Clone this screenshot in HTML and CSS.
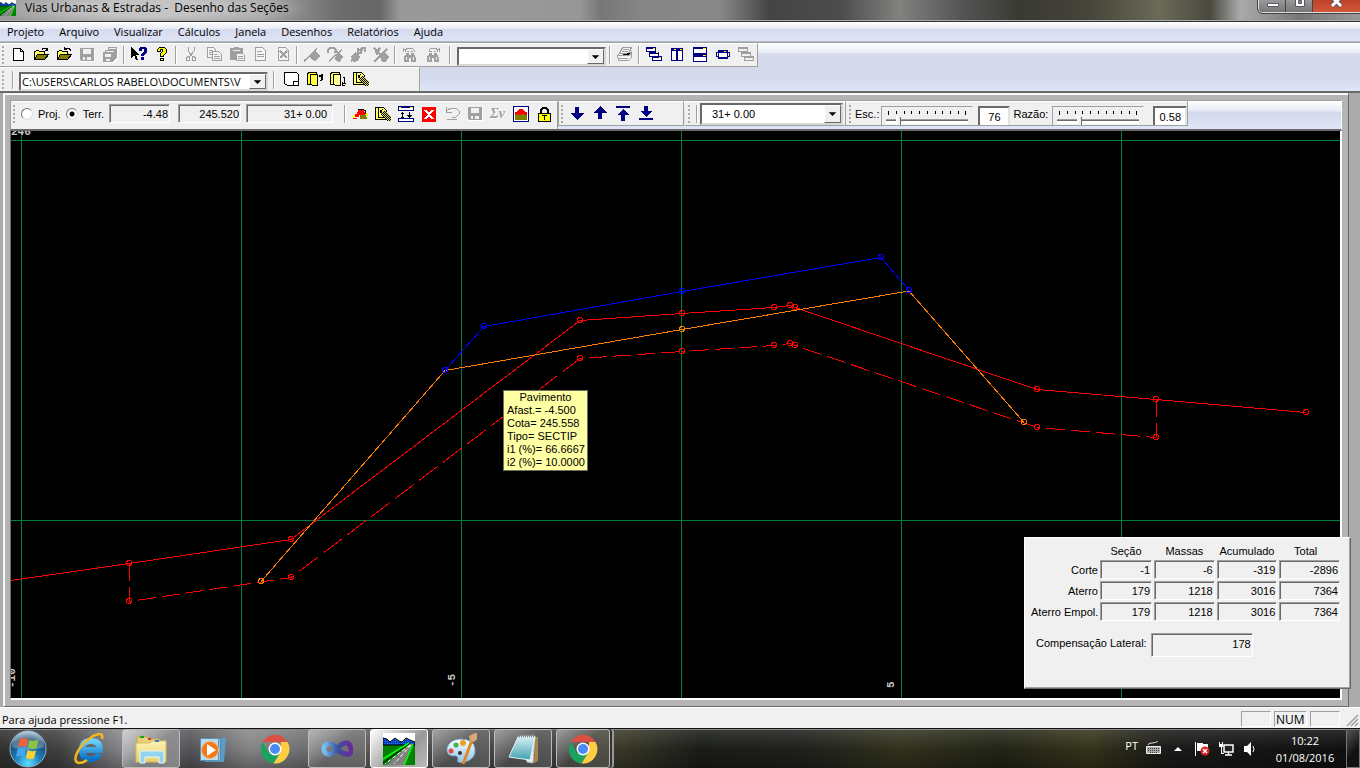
FILE: index.html
```html
<!DOCTYPE html>
<html lang="pt-BR">
<head>
<meta charset="utf-8">
<title>Vias Urbanas &amp; Estradas - Desenho das Seções</title>
<link rel="stylesheet" href="styles.css">
</head>
<body>
<svg class="sprite" aria-hidden="true">
  <defs>
    <pattern id="hatch" width="2" height="2" patternUnits="userSpaceOnUse"><path fill="#ffff80" d="M0 0h2v2H0z"/><path fill="#ff0" d="M0 0h1v1H0zM1 1h1v1H1z"/></pattern>
    <pattern id="check" width="2" height="2" patternUnits="userSpaceOnUse"><path fill="#e0d860" d="M0 0h2v2H0z"/><path fill="#000" d="M0 0h1v1H0zM1 1h1v1H1z"/></pattern>
    <pattern id="ridge" width="2" height="2" patternUnits="userSpaceOnUse"><path fill="#0040c0" d="M0 0h2v2H0z"/><path fill="#2878e8" d="M0 0h1v1H0z"/></pattern>
    <radialGradient id="orb" cx=".5" cy=".9" r=".9"><stop offset="0" stop-color="#5fe0ff"/><stop offset=".4" stop-color="#1d7db8"/><stop offset=".75" stop-color="#1c4a70"/><stop offset="1" stop-color="#a8c4d8"/></radialGradient>
    <linearGradient id="ie" x2="0" y2="1"><stop offset="0" stop-color="#6fd0fa"/><stop offset="1" stop-color="#0870c8"/></linearGradient>
    <linearGradient id="folder" x2="0" y2="1"><stop offset="0" stop-color="#fdf3b4"/><stop offset="1" stop-color="#ecce6c"/></linearGradient>
    <linearGradient id="vs"><stop offset="0" stop-color="#78c0f0"/><stop offset=".5" stop-color="#3a50a0"/><stop offset="1" stop-color="#6a2a9c"/></linearGradient>
    <linearGradient id="pad" x2="0" y2="1"><stop offset="0" stop-color="#d4f0f4"/><stop offset="1" stop-color="#3fa0b0"/></linearGradient>
    <linearGradient id="palette" x2="0" y2="1"><stop offset="0" stop-color="#fff"/><stop offset="1" stop-color="#8cc4ec"/></linearGradient>
  </defs>
  <symbol id="i-new" viewBox="0 0 16 16"><path fill="#fff" stroke="#000" d="M3.500 1.500h7l3 3v9h-10z"/><path fill="none" stroke="#000" d="M10.500 1.500v3h3"/></symbol>
  <symbol id="i-open" viewBox="0 0 16 16"><path fill="#ffff60" stroke="#000" d="M1.500 12.500v-8h1l1-1h2l1 1h5v3"/><path fill="#808000" stroke="#000" d="M1.500 12.500l3-5h11l-4 5z"/><path fill="none" stroke="#000" d="M9 2.500l1-1h3l1 2M12 3.500h3M14.500 1v3"/></symbol>
  <symbol id="i-openup" viewBox="0 0 16 16"><path fill="#ffff60" stroke="#000" d="M1.500 12.500v-8h1l1-1h2l1 1h5v3"/><path fill="#808000" stroke="#000" d="M1.500 12.500l3-5h11l-4 5z"/><path fill="none" stroke="#000" d="M8.500 0v3M8 2.500h3M9 1.500h4l1 1v1"/></symbol>
  <symbol id="i-save" viewBox="0 0 16 16"><path fill="#fff" d="M2 15h14V3h-1v11H2z"/><path fill="#a0a0a0" fill-rule="evenodd" d="M1 1h14v13H2l-1-1zM4 2v5h8V2zM4 10v3h2v-3zM8 10v3h4v-3z"/></symbol>
  <symbol id="i-saveall" viewBox="0 0 16 16"><path fill="#fff" d="M2 16h10l4-4V2h-1v10l-4 3H2z"/><path fill="#a0a0a0" fill-rule="evenodd" d="M6 0h9v10l-4 5H1V5h2V3h3zM7 1v1h7V1zM4 4v1h8V4zM3 7v3h6V7zM4 12v2h4v-2z"/></symbol>
  <symbol id="i-help" viewBox="0 0 16 16"><path d="M0 0v11l3-3 2 5h2l-2-5h4z"/><path fill="#000080" d="M9 0h5l2 2v3l-3 3v1h-3V7l3-3V2h-2v2H8V1zM10 10h3v3h-3z"/></symbol>
  <symbol id="i-about" viewBox="0 0 16 16"><path fill="#ff0" stroke="#000" d="M5.500.5h5l2 2v3l-3 3v1h-3v-3l2-2v-2h-2v2h-3v-2zM6.500 11.500h3v2h-3z"/></symbol>
  <symbol id="i-cut" viewBox="0 0 16 16"><g fill="none" stroke="#a0a0a0"><path d="M5 0v4l5 6M11 0v4l-5 6"/><path d="M3.500 10.500l2-1 1 1v3h-3zM9.500 9.500h2l1 2v2h-3z"/></g></symbol>
  <symbol id="i-copy" viewBox="0 0 16 16"><g fill="#f4f4f4" stroke="#a0a0a0"><path d="M1.500.5h6l2 2v8h-8z"/><path d="M3 3.500h4M3 5.500h3M3 7.500h3"/><path d="M6.500 4.500h6l3 3v6h-9z"/><path d="M8 7.500h3M8 9.500h6M8 11.500h6"/></g></symbol>
  <symbol id="i-paste" viewBox="0 0 16 16"><path fill="#a0a0a0" d="M1 1h4V0h5v1h4v12H1z"/><path stroke="#f0f0f0" d="M4 3.500h7"/><path fill="#f4f4f4" stroke="#a0a0a0" d="M7.500 6.500h6l2 2v5h-8z"/><path stroke="#a0a0a0" d="M9 9.500h5M9 11.500h5"/></symbol>
  <symbol id="i-doc" viewBox="0 0 16 16"><path fill="#f4f4f4" stroke="#a0a0a0" d="M3.500.5h7l3 3v10h-10z"/><path stroke="#a0a0a0" d="M5 4.500h5M5 7.500h7M5 9.500h7"/></symbol>
  <symbol id="i-docx" viewBox="0 0 16 16"><path fill="#f4f4f4" stroke="#a0a0a0" d="M3.500.5h7l3 3v10h-10z"/><path stroke="#a0a0a0" stroke-width="2" d="M5 4l7 7M12 4l-7 7"/></symbol>
  <symbol id="i-p1" viewBox="0 0 16 16"><path stroke="#a0a0a0" stroke-width="1.500" d="M0 14L13 2"/><path fill="#a0a0a0" d="M11 4l5 5-4 5-4-1-2-3z"/></symbol>
  <symbol id="i-p2" viewBox="0 0 16 16"><path fill="none" stroke="#a0a0a0" stroke-width="1.500" d="M1 6V3l2-2h4l2 2v2M7 5h4M2 14L15 3"/><path fill="#a0a0a0" d="M12 5l4 5-3 5-4-1-1-3z"/></symbol>
  <symbol id="i-p3" viewBox="0 0 16 16"><path fill="none" stroke="#a0a0a0" stroke-width="1.500" d="M1 14L13 3M8 1v5h4M9 4l3-3h3v4"/><path fill="#a0a0a0" d="M5 5l5 5-2 4-5 1-2-5z"/></symbol>
  <symbol id="i-p4" viewBox="0 0 16 16"><path stroke="#a0a0a0" stroke-width="2" d="M1 1l13 13M1 15L14 2M7 1L2 6"/><path fill="#a0a0a0" d="M11 5l5 5-3 5H9L7 9zM1 2l6 1-3 6z"/></symbol>
  <symbol id="i-find" viewBox="0 0 16 16"><path fill="#a0a0a0" d="M4 6h3v2h2V6h3v2h1l1 3v4H9v-4H7v4H2v-4l1-3h1zM5 4h2v1H5zM9 4h2v1H9z"/><path stroke="#f0f0f0" d="M4.500 10v3M11.500 10v3"/><path fill="none" stroke="#a0a0a0" d="M3.500 5V2.500L5 1h5l2 2v2M1 2.500h4M1.500 1v4"/></symbol>
  <symbol id="i-print" viewBox="0 0 16 16"><path fill="#f4f4f4" stroke="#a0a0a0" d="M5.500.5h9l-3 6h-9zM.5 8.500l2-2h9l3-2v6l-3 3H1.500z"/><path stroke="#a0a0a0" d="M6 2.500h6M5 4.500h6M1 8.500h11l3-3M1 11.500h10"/></symbol>
  <symbol id="i-cascade" viewBox="0 0 16 16"><g stroke="#000080" fill="#fff"><path d="M.5.5h9v4h-9zM3.500 5.500h9v4h-9zM6.500 9.500h9v4h-9z"/><path stroke-width="2" d="M0 1h10M3 6h10M6 10h10"/></g><path fill="#ff0" d="M7 1h2v1H7zM10 5h2v1h-2zM13 10h2v1h-2z"/></symbol>
  <symbol id="i-cascadeoff" viewBox="0 0 16 16"><g stroke="#a0a0a0" fill="#f0f0f0"><path d="M.5.5h9v4h-9zM3.500 5.500h9v4h-9zM6.500 9.500h9v4h-9z"/><path stroke-width="2" d="M0 1h10M3 6h10M6 10h10"/></g></symbol>
  <symbol id="i-tilev" viewBox="0 0 16 16"><path fill="#fff" stroke="#000080" d="M2.500 1.500h5v12h-5zM8.500 1.500h5v12h-5z"/><path stroke="#000080" stroke-width="3" d="M2 2.500h12"/><path fill="#ff0" d="M5 2h2v1H5zM11 2h2v1h-2z"/></symbol>
  <symbol id="i-tileh" viewBox="0 0 16 16"><path fill="#fff" stroke="#000080" d="M1.500.5h13v14h-13z"/><path stroke="#000080" stroke-width="2" d="M1 1h14M1 9h14M1 7h14"/><path fill="#ff0" d="M11 1h3v1h-3zM11 8h3v1h-3z"/></symbol>
  <symbol id="i-win" viewBox="0 0 16 16"><path fill="#fff" stroke="#000080" d="M3.500 3.500h9v8h-9z"/><path fill="#fff" stroke="#000080" d="M1.500 5.500h2v4h-2zM12.500 5.500h2v4h-2z"/><path stroke="#000080" stroke-width="2" d="M3 5h10M3 11h10"/><path fill="#ff0" d="M9 4h2v1H9z"/></symbol>
  <symbol id="i-sheet" viewBox="0 0 16 16"><path fill="#fff" stroke="#000" d="M.5 1.500h12l2 2v11h-11l-3-2z"/><path fill="none" stroke="#000" d="M9.500 14v-4h5"/></symbol>
  <symbol id="i-bookup" viewBox="0 0 16 16"><path fill="url(#hatch)" stroke="#000" d="M.5 2.500l2-1h7v12h-9z"/><path fill="url(#hatch)" stroke="#000" d="M3.500 3.500h7v11h-5l-2-2z"/><path fill="none" stroke="#000" stroke-width="2" d="M15 3v5l-1 2M12 5h4"/></symbol>
  <symbol id="i-bookdown" viewBox="0 0 16 16"><path fill="url(#hatch)" stroke="#000" d="M.5 2.500l2-1h7v12h-9z"/><path fill="#ffffa0" stroke="#000" d="M3.500 3.500h7v11h-5l-2-2z"/><path fill="none" stroke="#000" d="M12.500 6.500h2v6M12 12.500h4M12 11v3h3"/></symbol>
  <symbol id="i-map" viewBox="0 0 16 16"><path fill="#ffff70" stroke="#000" d="M.5 1.500h8l3 3v9h-11z"/><path fill="none" stroke="#000" d="M3.500 2v9h6M5 4l5 6M8 3L5 7"/><path fill="url(#check)" d="M6 6l4-1 6 6v4h-3L6 9z"/></symbol>
  <symbol id="i-hat" viewBox="0 0 16 16"><path fill="#f00" d="M4 8h1V6h1V4h6v2h1v3H4z"/><path d="M6 3h6v1H6zM12 4h2v4h-1V5h-1z"/><path fill="#808000" d="M8 9h6v2h1v2H8z"/><path fill="#ff0" d="M1 9h2v3H1zM14 7h2v3h-2z"/><path fill="#f00" d="M3 8h4v3H3zM1 12h4v1H1z"/></symbol>
  <symbol id="i-section" viewBox="0 0 16 16"><path fill="#fff" stroke="#000080" d="M.5.5h15v4H.5zM.5 12.500h15v3H.5z"/><path stroke="#000080" stroke-width="2" d="M0 1h16"/><path fill="#ff0" d="M1 1h2v1H1zM12 1h3v1h-3z"/><path d="M4 6h1v1h1v1H5v3h1v1H3v-1h1V8H3V7h1zM11 6h1v3h2v1h-1v1h-1v1h-1v-1h-1v-1H9V9h2z"/></symbol>
  <symbol id="i-del" viewBox="0 0 16 16"><path fill="#f00" d="M1 1h14v15H1z"/><path stroke="#fff" stroke-width="2" d="M4 4l8 9M12 4l-8 9"/></symbol>
  <symbol id="i-undo" viewBox="0 0 16 16"><path fill="none" stroke="#a0a0a0" d="M2.500 1v5h5M3 5l4-3h5l3 3v3l-3 3H8M3 13.500h10"/></symbol>
  <symbol id="i-land" viewBox="0 0 16 16"><path fill="#fff" stroke="#000080" d="M.5.500h15v15H.5z"/><path fill="#808000" d="M2 8h12v6H2z"/><path fill="#f00" d="M2 6h2V5h1V4h1V3h4v1h1v1h1v1h2v3h-3V8H9v1H6V8H4v1H2z"/></symbol>
  <symbol id="i-lock" viewBox="0 0 16 16"><path fill="none" stroke="#000" stroke-width="2" d="M5 8V4l2-2h3l2 2v4"/><path fill="#ff0" stroke="#000" d="M2.500 7.500h12v8h-12z"/><path d="M6 9h5v1H9v4H8v-4H6z"/></symbol>
  <symbol id="i-down" viewBox="0 0 16 16"><path fill="#000080" d="M6 1h4v6h5l-7 7-7-7h5z"/></symbol>
  <symbol id="i-up" viewBox="0 0 16 16"><path fill="#000080" d="M6 13h4V7h5L8 0 1 7h5z"/></symbol>
  <symbol id="i-first" viewBox="0 0 16 16"><path fill="#000080" d="M1 0h14v2H1zM6 15h4V9h4L8 3 2 9h4z"/></symbol>
  <symbol id="i-last" viewBox="0 0 16 16"><path fill="#000080" d="M1 12h14v2H1zM6 0h4v5h4l-6 6-6-6h4z"/></symbol>
  <symbol id="i-caret" viewBox="0 0 16 16"><path d="M4 6h8l-4 4z"/></symbol>
  <symbol id="app" viewBox="0 0 32 32"><path fill="#fff" d="M0 0h32v32H0z"/><path fill="#008000" d="M0 11h32v21H0z"/><path fill="url(#ridge)" stroke="#000" d="M0 5l4 1 3 3 5-4 4 3 3 1 4-4 4 2 5 2v3H0z"/><path fill="#808080" d="M27 11h3l-8 21H3z"/><path fill="none" stroke="#000" d="M27 10L0 30"/><path fill="none" stroke="#0f0" stroke-width="1.500" d="M26 10L0 26M30 11l-9 21"/><path stroke="#fff" stroke-dasharray="4 2" d="M28 12L11 31M27 12L2 31"/></symbol>
  <symbol id="t-chrome" viewBox="0 0 32 32"><path fill="#dd4f43" d="M3.500 9a14.500 14.500 0 0 1 25 0H16z"/><path fill="#1da160" d="M3.500 9a14.500 14.500 0 0 0 11 21.500L22 20l-12 0z"/><path fill="#ffce44" d="M28.500 9a14.500 14.500 0 0 1-14 21.500L21 20l1-11z"/><circle cx="16" cy="16" r="6.500" fill="#fff"/><circle cx="16" cy="16" r="5" fill="#4a8af4"/></symbol>
</svg>

<header class="title">
  <svg class="title-icon"><use href="#app"/></svg>
  <h1>Vias Urbanas &amp; Estradas -&nbsp; Desenho das Seções</h1>
  <div class="window-buttons">
    <button aria-label="Minimizar"><svg viewBox="0 0 28 12"><path fill="#fff" stroke="#555a66" d="M8.500 3.500h11v3h-11z"/></svg></button>
    <button aria-label="Restaurar"><svg viewBox="0 0 28 12"><path fill="#fff" stroke="#555a66" d="M9.500-2v8.500h9V-2z"/><path fill="#888" stroke="#555a66" d="M12.500.5h3v3h-3z"/></svg></button>
    <button class="close" aria-label="Fechar"><svg viewBox="0 0 28 12"><path fill="none" stroke="#555a66" stroke-width="5" d="M9-3l9 9M18-3L9 6"/><path fill="none" stroke="#fff" stroke-width="3" d="M9-3l9 9M18-3L9 6"/></svg></button>
  </div>
</header>

<nav class="menu">
  <button>Projeto</button><button>Arquivo</button><button>Visualizar</button><button>Cálculos</button><button>Janela</button><button>Desenhos</button><button>Relatórios</button><button>Ajuda</button>
</nav>

<div class="rebar">
  <div class="band band-top">
    <i class="grip"></i>
    <button class="tool" aria-label="Novo"><svg><use href="#i-new"/></svg></button>
    <button class="tool" aria-label="Abrir"><svg><use href="#i-open"/></svg></button>
    <button class="tool" aria-label="Abrir projeto"><svg><use href="#i-openup"/></svg></button>
    <button class="tool" aria-label="Salvar"><svg><use href="#i-save"/></svg></button>
    <button class="tool" aria-label="Salvar tudo"><svg><use href="#i-saveall"/></svg></button>
    <i class="sep"></i>
    <button class="tool" aria-label="Ajuda de contexto"><svg><use href="#i-help"/></svg></button>
    <button class="tool" aria-label="Sobre"><svg><use href="#i-about"/></svg></button>
    <i class="sep"></i>
    <button class="tool" aria-label="Recortar"><svg><use href="#i-cut"/></svg></button>
    <button class="tool" aria-label="Copiar"><svg><use href="#i-copy"/></svg></button>
    <button class="tool" aria-label="Colar"><svg><use href="#i-paste"/></svg></button>
    <button class="tool" aria-label="Documento"><svg><use href="#i-doc"/></svg></button>
    <button class="tool" aria-label="Excluir documento"><svg><use href="#i-docx"/></svg></button>
    <i class="sep"></i>
    <button class="tool" aria-label="Marcador"><svg><use href="#i-p1"/></svg></button>
    <button class="tool" aria-label="Próximo marcador"><svg><use href="#i-p2"/></svg></button>
    <button class="tool" aria-label="Marcador anterior"><svg><use href="#i-p3"/></svg></button>
    <button class="tool" aria-label="Limpar marcadores"><svg><use href="#i-p4"/></svg></button>
    <i class="sep"></i>
    <button class="tool" aria-label="Localizar anterior"><svg><use href="#i-find"/></svg></button>
    <button class="tool flip" aria-label="Localizar próximo"><svg><use href="#i-find"/></svg></button>
    <i class="sep"></i>
    <div class="combo combo-find"><select aria-label="Localizar texto"><option></option></select><span class="arrow"><svg><use href="#i-caret"/></svg></span></div>
    <i class="sep"></i>
    <button class="tool" aria-label="Imprimir"><svg><use href="#i-print"/></svg></button>
    <i class="sep"></i>
    <button class="tool" aria-label="Em cascata"><svg><use href="#i-cascade"/></svg></button>
    <button class="tool" aria-label="Lado a lado vertical"><svg><use href="#i-tilev"/></svg></button>
    <button class="tool" aria-label="Lado a lado horizontal"><svg><use href="#i-tileh"/></svg></button>
    <button class="tool" aria-label="Janela única"><svg><use href="#i-win"/></svg></button>
    <button class="tool" aria-label="Fechar todas"><svg><use href="#i-cascadeoff"/></svg></button>
  </div>
  <div class="band band-path">
    <i class="grip"></i>
    <i class="sep"></i>
    <div class="combo combo-path"><select aria-label="Pasta do projeto"><option>C:\USERS\CARLOS RABELO\DOCUMENTS\V</option></select><span class="arrow"><svg><use href="#i-caret"/></svg></span></div>
    <i class="sep"></i>
    <div class="path-tools">
      <button class="tool" aria-label="Folha"><svg><use href="#i-sheet"/></svg></button>
      <button class="tool" aria-label="Subir"><svg><use href="#i-bookup"/></svg></button>
      <button class="tool" aria-label="Descer"><svg><use href="#i-bookdown"/></svg></button>
      <button class="tool" aria-label="Mapa"><svg><use href="#i-map"/></svg></button>
    </div>
  </div>
</div>

<main class="mdi">
  <section class="child">
    <div class="child-bar">
      <form class="band band-view">
        <i class="grip"></i>
        <label><input type="radio" name="base"> Proj.</label>
        <label><input type="radio" name="base" checked> Terr.</label>
        <output class="field f-offset">-4.48</output>
        <output class="field f-level">245.520</output>
        <output class="field f-station">31+ 0.00</output>
        <i class="sep"></i>
        <button type="button" class="tool" aria-label="Terreno"><svg><use href="#i-hat"/></svg></button>
        <button type="button" class="tool" aria-label="Mapa"><svg><use href="#i-map"/></svg></button>
        <button type="button" class="tool" aria-label="Seção tipo"><svg><use href="#i-section"/></svg></button>
        <button type="button" class="tool" aria-label="Excluir"><svg><use href="#i-del"/></svg></button>
        <button type="button" class="tool" aria-label="Desfazer"><svg><use href="#i-undo"/></svg></button>
        <button type="button" class="tool" aria-label="Salvar seção"><svg><use href="#i-save"/></svg></button>
        <button type="button" class="tool sum">Σν</button>
        <button type="button" class="tool" aria-label="Áreas"><svg><use href="#i-land"/></svg></button>
        <button type="button" class="tool" aria-label="Travar"><svg><use href="#i-lock"/></svg></button>
      </form>
      <div class="band band-nav">
        <i class="grip"></i>
        <button class="tool" aria-label="Próxima"><svg><use href="#i-down"/></svg></button>
        <button class="tool" aria-label="Anterior"><svg><use href="#i-up"/></svg></button>
        <button class="tool" aria-label="Primeira"><svg><use href="#i-first"/></svg></button>
        <button class="tool" aria-label="Última"><svg><use href="#i-last"/></svg></button>
      </div>
      <div class="band band-station">
        <i class="grip"></i>
        <i class="sep"></i>
        <div class="combo combo-station"><select aria-label="Estaca"><option>31+ 0.00</option></select><span class="arrow"><svg><use href="#i-caret"/></svg></span></div>
      </div>
      <div class="band band-scale">
        <i class="grip"></i>
        <label for="esc">Esc.:</label>
        <div class="slider"><svg><path stroke="#000" d="M2.500 0v4M10.500 0v3M18.500 0v3M25.500 0v3M33.500 0v3M41.500 0v3M49.500 0v3M56.500 0v3M64.500 0v3M72.500 0v3M79.500 0v4"/></svg><input type="range" id="esc" value="13"></div>
        <input type="text" class="num" value="76" aria-label="Valor da escala">
        <label for="razao">Razão:</label>
        <div class="slider"><svg><path stroke="#000" d="M2.500 0v4M10.500 0v3M18.500 0v3M25.500 0v3M33.500 0v3M41.500 0v3M49.500 0v3M56.500 0v3M64.500 0v3M72.500 0v3M79.500 0v4"/></svg><input type="range" id="razao" value="26"></div>
        <input type="text" class="num num-last" value="0.58" aria-label="Valor da razão">
      </div>
    </div>
    <div class="canvas">
      <svg class="drawing" role="img" aria-label="Seção transversal">
        <g transform="translate(-11 -131)" fill="none" shape-rendering="crispEdges">
          <path stroke="#008040" d="M21.500 131v1200M241.500 131v1200M461.500 131v1200M681.500 131v1200M901.500 131v1200M1121.500 131v1200M11 140.500h3000M11 520.500h3000"/>
          <g stroke="#f00">
            <path d="M11 580.500L129 563.500 291 539.500 580 320.500 682 313.500 774 307.500 790 305.500 795 307.500 1037 389.500 1156 399.500 1306 412.500"/>
            <path stroke-dasharray="18 6" d="M129.500 563v38M1156.500 399v38"/>
            <path stroke-dasharray="18 6" stroke-dashoffset="-9" d="M129 601.500L291 577.500"/>
            <path stroke-dasharray="23 7" stroke-dashoffset="-11" d="M291 577.500L580 358.500"/>
            <path stroke-dasharray="18 6" stroke-dashoffset="-9" d="M580 358.500L682 351.500M682 351.500L774 345.500M774 345.500l16-2 5 2"/>
            <path stroke-dasharray="19 6" stroke-dashoffset="-9" d="M795 345.500L1037 427.500M1037 427.500L1156 437.500"/>
          </g>
          <path stroke="#ff8000" d="M261 581.500L445 370.500 682 329.500 909 291 1024 422.500"/>
          <path stroke="#00f" d="M445 370.500L484 326.500 682 291.500 881 257.500 909 290.500"/>
          <g stroke="#f00"><circle cx="129" cy="563" r="2.500"/><circle cx="129" cy="601" r="2.500"/><circle cx="291" cy="539" r="2.500"/><circle cx="291" cy="577" r="2.500"/><circle cx="580" cy="320" r="2.500"/><circle cx="580" cy="358" r="2.500"/><circle cx="682" cy="313" r="2.500"/><circle cx="682" cy="351" r="2.500"/><circle cx="774" cy="307" r="2.500"/><circle cx="790" cy="305" r="2.500"/><circle cx="795" cy="307" r="2.500"/><circle cx="774" cy="345" r="2.500"/><circle cx="790" cy="343" r="2.500"/><circle cx="795" cy="345" r="2.500"/><circle cx="1037" cy="389" r="2.500"/><circle cx="1037" cy="427" r="2.500"/><circle cx="1156" cy="399" r="2.500"/><circle cx="1156" cy="437" r="2.500"/><circle cx="1306" cy="412" r="2.500"/></g>
          <g stroke="#ff8000"><circle cx="261" cy="581" r="2.500"/><circle cx="682" cy="329" r="2.500"/><circle cx="1024" cy="422" r="2.500"/></g>
          <g stroke="#00f"><circle cx="445" cy="370" r="2.500"/><circle cx="484" cy="326" r="2.500"/><circle cx="682" cy="291" r="2.500"/><circle cx="881" cy="257" r="2.500"/><circle cx="909" cy="290" r="2.500"/></g>
        </g>
        <g class="axis" transform="translate(-11 -131)">
          <text x="11" y="135">246</text>
          <text transform="translate(15 688) rotate(-90)">-10</text>
          <text transform="translate(455 687) rotate(-90)">-5</text>
          <text transform="translate(894 688) rotate(-90)">5</text>
        </g>
      </svg>
      <div class="tip" role="tooltip"><b>Pavimento</b><span>Afast.= -4.500</span><span>Cota= 245.558</span><span>Tipo= SECTIP</span><span>i1 (%)= 66.6667</span><span>i2 (%)= 10.0000</span></div>
    </div>
  </section>
  <aside class="panel">
    <table>
      <thead><tr><td></td><th scope="col">Seção</th><th scope="col">Massas</th><th scope="col">Acumulado</th><th scope="col" class="total">Total</th></tr></thead>
      <tbody>
        <tr><th scope="row">Corte</th><td>-1</td><td>-6</td><td>-319</td><td>-2896</td></tr>
        <tr><th scope="row">Aterro</th><td>179</td><td>1218</td><td>3016</td><td>7364</td></tr>
        <tr><th scope="row">Aterro Empol.</th><td>179</td><td>1218</td><td>3016</td><td>7364</td></tr>
      </tbody>
    </table>
    <div class="lateral"><label for="comp">Compensação Lateral:</label><output id="comp" class="field">178</output></div>
  </aside>
</main>

<footer class="status">
  <span class="status-text">Para ajuda pressione F1.</span>
  <span class="pane"></span><span class="pane pane-num">NUM</span><span class="pane"></span>
  <svg class="resize"><path stroke="#a0a0a0" stroke-width="1.500" d="M1 12L12 1M5 12l7-7M9 12l3-3"/></svg>
</footer>

<div class="taskbar">
  <button class="start" aria-label="Iniciar"><svg viewBox="0 0 38 38"><circle cx="19" cy="19" r="18" fill="url(#orb)" stroke="#8fb4cc"/><path fill="#fff" opacity=".25" d="M3 17a16 16 0 0 1 32 0q-16 6-32 0z"/><path fill="#f0603a" d="M11 9q4-2 8 0l-1.500 8q-4-2-8.500 0z"/><path fill="#8cc63f" d="M20.500 10q4 2 9-.5l-2 8.500q-4 2-8.500-.5z"/><path fill="#40a8f0" d="M8.500 19q4-2 8.500 0l-2 8q-4-2-8 0z"/><path fill="#fcd232" d="M18.500 20q4 2 8.500.5l-2 8q-4 1.500-8-.5z"/></svg></button>
  <button class="task" aria-label="Internet Explorer"><svg viewBox="0 0 32 32"><path fill="none" stroke="url(#ie)" stroke-width="6" d="M9 17h18q0-9-9-9t-9 9 9 9q6 0 8-5"/><path fill="none" stroke="#f2b81c" stroke-width="2.500" d="M6 30q-6-1-2-10T20 3q11-5 9 3M6 30q4 0 8-3"/></svg></button>
  <button class="task open" aria-label="Windows Explorer"><svg viewBox="0 0 32 32"><path fill="#e8cf7c" stroke="#c8a848" d="M3.500 4h9l2 2h9l2 2h5v20H2V4z"/><path fill="url(#folder)" stroke="#d8bc60" d="M1 10h14l2-2h14v21H1z"/><path fill="#20a020" d="M5 3h4v2H5z"/><path fill="#d03030" d="M13 5h3v2h-3z"/><path fill="#3080d0" d="M20 7h4v2h-4z"/><path fill="#90d4f0" stroke="#e8f8ff" d="M5 30V20q0-2 2-2h20q2 0 2 2v10h-5v-6H10v6z"/></svg></button>
  <button class="task" aria-label="Media Player"><svg viewBox="0 0 32 32"><path fill="#5a9cc8" d="M8 5h21l-2 24H8z"/><path fill="#8cc4e4" stroke="#5088b0" d="M5.500 5.500h18v23l-18-1z"/><path fill="#b8dcf0" stroke="#5890b8" d="M3.500 5.500h18v22h-18z"/><circle cx="13" cy="17" r="8.500" fill="#f07818" stroke="#fcb878"/><path fill="#fff" d="M10 11l9 6-9 6z"/></svg></button>
  <button class="task" aria-label="Chrome"><svg><use href="#t-chrome"/></svg></button>
  <button class="task open dark" aria-label="Visual Studio"><svg viewBox="0 0 32 32"><path fill="none" stroke="url(#vs)" stroke-width="5" d="M16 16Q11 10 7 11t-4 5 4 5 9-5 9-6 5 6-5 5-9-5z"/></svg></button>
  <button class="task open active" aria-label="Vias Urbanas &amp; Estradas"><svg><use href="#app"/></svg></button>
  <button class="task open dark" aria-label="Paint"><svg viewBox="0 0 32 32"><path fill="url(#palette)" stroke="#78a8cc" d="M15 6q14 0 15 10t-10 13q-9 2-7-3 0-4-5-3-7-1-6-8 2-8 13-9z"/><circle cx="15" cy="20" r="2" fill="#333"/><circle cx="6" cy="18" r="2.500" fill="#e04848"/><circle cx="11" cy="12" r="2.500" fill="#40b040"/><circle cx="18" cy="10" r="3" fill="#f0a020"/><path stroke="#e08828" stroke-width="3" d="M27 7l-9 24"/><path fill="#d8a878" d="M25 8l-1-5 8-4 1 6-4 4z"/></svg></button>
  <button class="task open dark" aria-label="Bloco de Notas"><svg viewBox="0 0 32 32"><path fill="#a88848" d="M28 4h3v24l-4 2z"/><path fill="#e8eef0" stroke="#b0b8bc" d="M12 3h16l-2 27-6-1z"/><path fill="url(#pad)" stroke="#e0f4f8" d="M11 4h17l-5 23-21-3z"/><path stroke="#888" stroke-width="3" stroke-dasharray="1 1" d="M12 3h16"/></svg></button>
  <button class="task open dark stack" aria-label="Chrome, janelas abertas"><svg><use href="#t-chrome"/></svg></button>
  <div class="tray">
    <span class="lang">PT</span>
    <svg class="tray-icon" viewBox="0 0 16 16"><path fill="none" stroke="#ddd" d="M2 4q0-2 4-2t6-2"/><path fill="#aaa" stroke="#eee" d="M.5 5.500h14v7H.5z"/><path stroke="#333" stroke-dasharray="1 1" d="M2 7.500h11M2 9.500h11M4 11.500h8"/></svg>
    <button class="tray-icon more" aria-label="Mostrar ícones ocultos"><svg viewBox="0 0 16 16"><path fill="#fff" d="M8 6l4 4H4z"/></svg></button>
    <svg class="tray-icon" viewBox="0 0 16 16"><path fill="#fff" d="M1 1h1v14H1zM3 2h6v1h5v8H9v-1H3z"/><circle cx="11" cy="10" r="4.500" fill="#d82020"/><path stroke="#fff" stroke-width="1.500" d="M9 8l4 4M13 8l-4 4"/></svg>
    <svg class="tray-icon" viewBox="0 0 16 16"><path fill="#222" stroke="#fff" stroke-width="1.500" d="M6 4h9v7H6zM7 14h7M10.500 11v3"/><path fill="#fff" d="M1 1h1v2h2V1h1v5H4v6h2v1H3V6H1z"/></svg>
    <svg class="tray-icon" viewBox="0 0 16 16"><path fill="#fff" d="M2 5h3l4-4v14l-4-4H2z"/><path fill="none" stroke="#fff" d="M11 5q2 3 0 6"/></svg>
    <time class="clock"><span>10:22</span><span>01/08/2016</span></time>
  </div>
  <button class="desktop" aria-label="Mostrar área de trabalho"></button>
</div>
</body>
</html>
```
FILE: styles.css
```css
* { box-sizing: border-box; }

:root {
  --ui: "Open Sans", "Noto Sans", sans-serif;
  --dialog: "Liberation Sans", Arial, sans-serif;
  --face: #f0f0f0;
}

body {
  margin: 0;
  height: 100vh;
  display: flex;
  flex-direction: column;
  overflow: hidden;
  background: var(--face);
  color: #000;
  font: 11px/16px var(--ui);
}

button, input, select { font: inherit; color: inherit; margin: 0; }
button { background: none; border: 0; padding: 0; }
svg { display: block; }
.sprite { position: absolute; width: 0; height: 0; }

/* title */
.title {
  display: flex;
  align-items: flex-start;
  height: 22px;
  flex: none;
  overflow: hidden;
  border-bottom: 1px solid #333;
  box-shadow: inset 0 -1px #aaa;
  background:
    radial-gradient(ellipse 160px 20px at 150px 8px, #c4c4c4 40%, transparent),
    linear-gradient(90deg, #999 0, #a4a4a4 260px, #6c6c6c 340px, #666 380px, #999 400px, #979797 580px, #777 600px, #858585 640px, #888 720px, #444 770px, #4c4c4c 840px, #80827f 900px, #555 960px, #3a3a34 1020px, #45453a 1090px, #6c6b58 1160px, #48483e 1210px, #aaa 1240px, #777 1300px, #999 1360px);
}
.title-icon { width: 16px; height: 16px; }
.title h1 { flex: 1; margin: 0 0 0 9px; font-size: 12px; line-height: 15px; font-weight: 400; }
.window-buttons { display: flex; height: 13px; border: 1px solid #ddd; border-top: 0; border-right: 0; border-radius: 0 0 0 5px; overflow: hidden; outline: 1px solid #444; }
.window-buttons button { width: 27px; background: linear-gradient(#999, #777); border-right: 1px solid #444; }
.window-buttons .close { width: 47px; border: 0; background: linear-gradient(#c0402a, #d05838); }
.window-buttons svg { width: 28px; height: 12px; margin: 0 auto; }

/* menu */
.menu {
  display: flex;
  gap: 15px;
  height: 20px;
  flex: none;
  padding: 0 7px;
  background: linear-gradient(#fff, #e6eaf4 7px, #d5daee 7px, #dfe4f5);
  border-bottom: 1px solid #b6bccc;
}
.menu button { line-height: 18px; }

/* toolbars */
.rebar {
  flex: none;
  border-top: 1px solid #a0a0a0;
  background: linear-gradient(#fff, #e6eaf4 10px, #d4d9ec 11px, #d4d9ec 34px, #e0e6f8);
}
.band { display: flex; align-items: center; width: max-content; background: var(--face); border-right: 1px solid #a0a0a0; }
.band-top { height: 24px; border-top: 1px solid #fff; border-bottom: 1px solid #a0a0a0; }
.band-path { height: 24px; width: 420px; border-top: 1px solid #fff; }
.grip { width: 2px; height: 18px; margin: 0 2px 0 2px; background: repeating-linear-gradient(#aaa 0 2px, transparent 2px 4px); flex: none; }
.sep { width: 6px; height: 18px; flex: none; background: linear-gradient(90deg, transparent 2px, #a0a0a0 2px 3px, #fff 3px 4px, transparent 4px); }
.tool { width: 23px; height: 22px; display: grid; place-items: center; flex: none; }
.tool svg { width: 16px; height: 16px; shape-rendering: crispEdges; }
.flip { margin-right: 3px; }
.flip svg { transform: scaleX(-1); }
.combo { position: relative; display: flex; background: #fff; border: 2px solid; border-color: #696969 #d8d8d8 #d8d8d8 #696969; overflow: hidden; }
.combo select { appearance: none; width: 100%; border: 0; outline: 0; background: #fff; padding: 0 18px 0 1px; height: 16px; }
.arrow { position: absolute; right: 0; top: 0; bottom: 0; width: 17px; display: grid; grid-template: 100% / 100%; place-items: center; background: var(--face); border: 1px solid; border-color: #fff #696969 #696969 #fff; pointer-events: none; }
.arrow svg { width: 15px; height: 16px; }
.combo-find { width: 149px; height: 19px; align-self: flex-end; margin: 0 1px 0 4px; }
.combo-path { width: 249px; height: 19px; align-self: flex-end; margin: 0 3px; }
.band-path .sep { margin-left: 4px; }
.combo-path + .sep { margin-left: 0; }
.path-tools { display: flex; padding: 0 0 2px 3px; }

/* MDI area */
.mdi { position: relative; flex: 1; min-height: 0; display: flex; padding: 0 11px 0 3px; background: #ababab; border-top: 2px solid #696969; border-bottom: 1px solid #fff; }
.child { flex: 1; min-width: 0; display: flex; flex-direction: column; background: #b4b4b4; padding: 6px; border: 1px solid; border-color: #f0f0f0 #696969 #696969 #f0f0f0; box-shadow: inset 1px 1px #fff; }
.child-bar {
  display: flex;
  height: 31px;
  flex: none;
  border: 1px solid;
  border-width: 1px 1px 2px;
  border-color: #a0a0a0 #fff #696969 #a0a0a0;
  background: linear-gradient(#fff, #e6eaf4 10px, #d4d9ec 11px, #dfe5f7);
  font: 11px/14px var(--dialog);
}
.child-bar .band { border-top: 1px solid #fff; }
.band-view .grip { margin-right: 6px; }
.band-view label { display: flex; align-items: center; gap: 5px; margin-right: 5px; }
.band-view input { appearance: none; width: 12px; height: 12px; border-radius: 50%; border: 1px solid; border-color: #777 #ddd #ddd #777; background: #fff; }
.band-view input:checked { background: radial-gradient(#000 2px, #fff 3px); }
.field { display: block; height: 19px; border: 1px solid; border-color: #a0a0a0 #fff #fff #a0a0a0; box-shadow: inset 1px 1px #696969; padding: 2px 1px 0 0; text-align: right; }
.f-offset { width: 61px; }
.f-level { width: 63px; margin-left: 8px; }
.f-station { width: 87px; margin: 0 9px 0 5px; padding-right: 5px; }
.sum { font: italic bold 14px/16px "Liberation Serif", serif; color: #a0a0a0; text-shadow: 1px 1px #fff; }
.band-view { width: 547px; padding-bottom: 4px; overflow: hidden; }
.band-nav { width: 126px; height: 25px; border-left: 1px solid #a0a0a0; border-bottom: 1px solid #a0a0a0; padding-left: 0; }
.band-station { width: 161px; height: 25px; border-bottom: 1px solid #a0a0a0; margin-left: 1px; padding-left: 1px; overflow: hidden; }
.combo-station { width: 143px; height: 22px; }
.combo-station select { height: 18px; padding-left: 10px; }
.band-station .sep { margin-left: 2px; }
.band-scale { height: 25px; border-bottom: 1px solid #a0a0a0; padding-left: 1px; overflow: hidden; gap: 2px; }
.slider { width: 92px; height: 20px; margin-top: 4px; padding: 4px 4px 0 4px; border: 1px solid; border-color: #a0a0a0 transparent transparent #a0a0a0; overflow: hidden; flex: none; }
.slider svg { width: 84px; height: 4px; shape-rendering: crispEdges; }
.slider input { appearance: none; display: block; width: 82px; height: 12px; background: linear-gradient(transparent 4px, #a0a0a0 4px 5px, #696969 5px 6px, #fff 6px 9px, transparent 9px); }
.slider input::-webkit-slider-thumb { appearance: none; width: 5px; height: 10px; background: var(--face); border: 1px solid; border-color: #fff #696969 #696969 #fff; border-radius: 3px 3px 0 0; }
.num { width: 32px; height: 20px; margin: 4px 1px 0 3px; border: 2px solid; border-color: #696969 #e3e3e3 #e3e3e3 #696969; border-bottom-width: 0; background: #fff; text-align: center; padding: 0; }
.num + label { margin-right: 2px; }
.num-last { width: 34px; margin-left: 7px; margin-right: 0; }

/* drawing */
.canvas { position: relative; flex: 1; min-height: 0; background: #000; overflow: hidden; border: 1px solid; border-width: 0 2px 2px 0; border-color: #fff; border-left: 1px solid #696969; }
.drawing { position: absolute; inset: 0; width: 100%; height: 100%; }
.axis { font: bold 11px "Liberation Mono", monospace; fill: #c8c8c8; }
.tip { position: absolute; left: 492px; top: 259px; display: flex; flex-direction: column; width: 85px; padding: 0 3px 1px; background: #ffffa4; border: 1px solid #707060; font: 11px/13px var(--dialog); white-space: nowrap; }
.tip b { font-weight: 400; text-align: center; }

/* volumes */
.panel { position: absolute; right: 9px; bottom: 18px; width: 327px; height: 152px; padding: 3px 8px 0 4px; background: var(--face); border: 1px solid; border-color: #fff #696969 #696969 #fff; box-shadow: inset -1px -1px #a0a0a0; font: 11px/14px var(--dialog); }
.panel table { width: 100%; table-layout: fixed; border-spacing: 2px 2px; }
.panel th { font-weight: 400; padding: 0; white-space: nowrap; }
.panel thead td { width: 67px; padding: 0; }
.panel thead th { height: 15px; }
.panel thead th:nth-child(2) { width: 52px; }
.panel thead th.total { padding-right: 8px; }
.panel tbody th { text-align: right; }
.panel tbody td { height: 19px; padding: 1px 1px 0 0; text-align: right; border: 1px solid; border-color: #a0a0a0 #fff #fff #a0a0a0; box-shadow: inset 1px 1px #696969; }
.lateral { display: flex; gap: 4px; margin: 10px 0 0 7px; line-height: 20px; }
.lateral .field { width: 102px; height: 24px; padding-top: 0; }

/* status */
.status { display: flex; flex: none; height: 20px; gap: 3px; padding: 3px 1px 1px 2px; }
.status-text { flex: 1; line-height: 17px; }
.pane { width: 30px; border: 1px solid; border-color: #a0a0a0 #fff #fff #a0a0a0; padding-left: 1px; line-height: 15px; font-size: 12px; }
.pane-num { width: 33px; }
.resize { width: 13px; height: 13px; align-self: flex-end; margin-left: 3px; }

/* taskbar */
.taskbar {
  display: flex;
  gap: 4px;
  height: 40px;
  flex: none;
  border-top: 1px solid #111;
  box-shadow: inset 0 1px #8a8a8a;
  background:
    linear-gradient(rgba(255, 255, 255, .12), rgba(0, 0, 0, .05) 50%, rgba(0, 0, 0, .3)),
    linear-gradient(90deg, #333 0, #444 60px, #8a8a8e 120px, #58585c 190px, #8c8c8e 250px, #77777a 300px, #555 400px, #444 560px, #3c3b2a 620px, #1c1e1a 700px, #20221e 800px, #34341f 900px, #242618 1000px, #38361c 1090px, #1c1c1a 1160px, #101010 1360px);
}
.start { width: 56px; display: grid; place-items: center; }
.start svg { width: 38px; height: 38px; }
.task { width: 58px; display: grid; place-items: center; }
.task svg { width: 32px; height: 32px; }
.task.open { border: 1px solid #bbb; border-radius: 3px; background: linear-gradient(135deg, rgba(255, 255, 255, .55), rgba(255, 255, 255, .2) 55%, rgba(255, 255, 255, .35)); }
.task.dark { background: linear-gradient(135deg, rgba(255, 255, 255, .4), rgba(255, 255, 255, .08) 50%, rgba(255, 255, 255, .15)); }
.task.active { border-color: #fff; background: linear-gradient(135deg, #fff, #999 60%, #bbb); }
.task.stack { width: 54px; box-shadow: 2px 0 #333, 4px 0 #999; }
.tray { margin-left: auto; display: flex; align-items: center; color: #fff; }
.lang { margin: 0 8px 5px 0; }
.tray-icon { width: 16px; height: 16px; margin-right: 8px; }
.clock { display: flex; flex-direction: column; align-items: center; width: 74px; margin-left: 2px; line-height: 17px; }
.desktop { width: 14px; border: 1px solid #777; background: linear-gradient(135deg, #555, #111 60%); }
```
